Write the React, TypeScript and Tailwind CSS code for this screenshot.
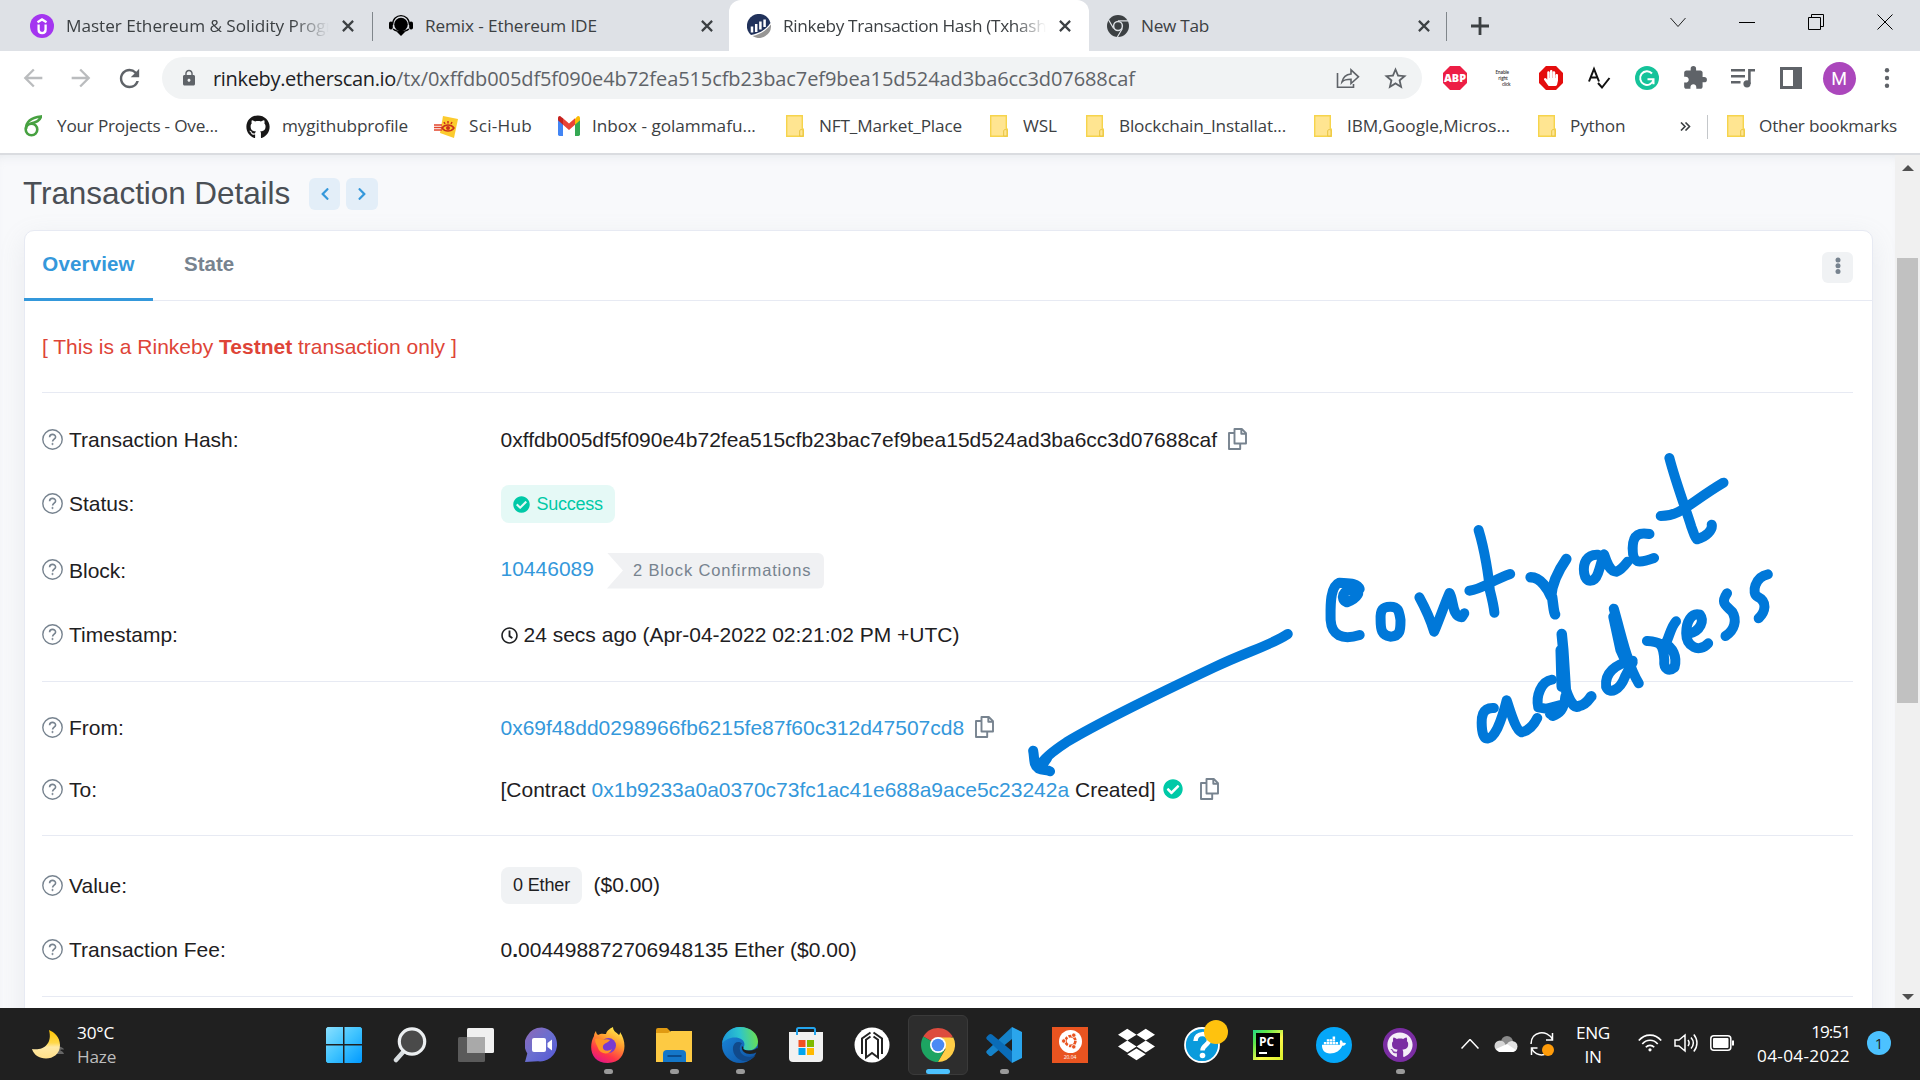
import React from "react";
import { FaGithub, FaCheckCircle, FaDropbox, FaDocker, FaRegClock, FaChevronLeft, FaChevronRight, FaHandPaper } from "react-icons/fa";
import { MdExtension, MdStarBorder, MdLock, MdArrowBack, MdArrowForward, MdRefresh } from "react-icons/md";

function CloseX() {
  return (
    <svg viewBox="0 0 12 12" className="size-3 shrink-0" stroke="#3c4043" strokeWidth="2.2" fill="none">
      <path d="M.9.9l10.2 10.2M11.1.9.9 11.1" />
    </svg>
  );
}

function Udemy() {
  return (
    <svg viewBox="0 0 24 24" className="size-6">
      <circle cx="12" cy="12" r="12" fill="#a435f0" />
      <path d="M7.500 8.200 12 5.400l4.500 2.800M8.600 10.500v5c0 4.800 7 4.800 7 0v-5" fill="none" stroke="#fff" strokeWidth="2.300" />
    </svg>
  );
}

function Remix() {
  return (
    <svg viewBox="0 0 24 24" className="size-6">
      <path d="M3.500 11C3.500-1.500 20.500-1.500 20.500 11" fill="none" stroke="#000" strokeWidth="1.300" />
      <circle cx="12" cy="10.500" r="6.800" fill="#000" />
      <rect x="0" y="7.500" width="3.800" height="8" rx="1.800" fill="#000" />
      <rect x="20.200" y="7.500" width="3.800" height="8" rx="1.800" fill="#000" />
      <path d="M4 15c4 3.500 12 3.500 16 0" fill="none" stroke="#000" strokeWidth="1.100" />
      <path d="M7.500 17.500h9L12 22z" fill="#000" />
    </svg>
  );
}

function Etherscan() {
  return (
    <svg viewBox="0 0 24 24" className="size-6">
      <path d="M4 21A12 12 0 1 1 23.500 9C18 17 11 19.500 4 21z" fill="#21325b" />
      <path d="M5 12.500v6M9.200 10v8M13.400 7.500v8M17.600 5.500v7.500" stroke="#fff" strokeWidth="2.500" />
      <path d="M5.500 22C14 20 20 16 23.900 10.500A12 12 0 0 1 5.500 22z" fill="#979695" />
    </svg>
  );
}

function ChromeGrey() {
  return (
    <svg viewBox="0 0 24 24" className="size-[22px]">
      <circle cx="12" cy="12" r="12" fill="#3c4043" />
      <path d="M12 6.500h11M7.200 14.700 1.800 5.400M16.800 14.700 11.300 24" stroke="#dee1e6" strokeWidth="1.300" />
      <circle cx="12" cy="12" r="5.600" fill="#dee1e6" />
      <circle cx="12" cy="12" r="4" fill="#3c4043" />
    </svg>
  );
}

function TabStrip() {
  return (
    <div className="flex h-[51px] shrink-0 bg-[#dee1e6] text-[17.2px] text-[#3c4043]">
      <div className="flex w-[372px] items-center pl-[30px] pt-px">
        <Udemy />
        <div className="-mt-px ml-[12px] w-[263px] overflow-hidden whitespace-nowrap [mask-image:linear-gradient(90deg,#000_86%,transparent)]"><span className="tracking-[-0.03px]">Master Ethereum &amp; Solidity Progr</span></div>
        <span className="ml-[13px]"><CloseX /></span>
      </div>
      <div className="mt-3 h-[29px] w-px bg-[#80868b]" />
      <div className="flex w-[356px] items-center pl-4 pt-px">
        <Remix />
        <span className="-mt-px ml-[12px] tracking-[-0.12px]">Remix - Ethereum IDE</span>
        <span className="ml-auto mr-[16px]"><CloseX /></span>
      </div>
      <div className="flex w-[360px] items-center rounded-t-xl bg-white pl-[18px] pt-px">
        <Etherscan />
        <div className="-mt-px ml-[12px] w-[263px] overflow-hidden whitespace-nowrap [mask-image:linear-gradient(90deg,#000_88%,transparent)]"><span className="tracking-[-0.33px]">Rinkeby Transaction Hash (Txhash:</span></div>
        <span className="ml-[13px]"><CloseX /></span>
      </div>
      <div className="flex w-[357px] items-center pl-[18px] pt-px">
        <ChromeGrey />
        <span className="-mt-px ml-[12px] tracking-[-0.28px]">New Tab</span>
        <span className="ml-auto mr-[16px]"><CloseX /></span>
      </div>
      <div className="mt-3 h-[29px] w-px bg-[#80868b]" />
      <div className="flex items-center pl-6">
        <svg viewBox="0 0 18 18" className="size-[18px]" stroke="#3c4043" strokeWidth="2.800"><path d="M9 0v18M0 9h18" /></svg>
      </div>
      <div className="ml-auto mr-[27px] flex h-[43px] items-center gap-[53px]">
        <svg viewBox="0 0 16 16" className="size-4" fill="none" stroke="#222"><path d="m.5 4 7.500 8.500L15.500 4" /></svg>
        <svg viewBox="0 0 16 16" className="size-4" fill="none" stroke="#000"><path d="M0 8.500h16" /></svg>
        <svg viewBox="0 0 16 16" className="size-4" fill="none" stroke="#000"><path d="M.5 3.500h12v12H.5zM3.500 3V.5h12v12H13" /></svg>
        <svg viewBox="0 0 16 16" className="size-4" fill="none" stroke="#000"><path d="m.5.5 15 15M15.500.5l-15 15" /></svg>
      </div>
    </div>
  );
}

function Cell({ children }: { children: React.ReactNode }) {
  return <div className="flex w-12 items-center justify-center">{children}</div>;
}

function Toolbar() {
  return (
    <div className="flex h-[54px] shrink-0 items-center bg-white text-[#5f6368]">
      <div className="flex w-[162px] items-center pl-[19px]">
        <MdArrowBack className="size-7 text-[#babcbe]" />
        <MdArrowForward className="ml-5 size-7 text-[#babcbe]" />
        <MdRefresh className="ml-5 size-[29px]" />
      </div>
      <div className="flex h-[42px] w-[1260px] items-center rounded-full bg-[#f1f3f4] pl-[18px]">
        <MdLock className="size-[18px]" />
        <span className="ml-[15px] mt-px whitespace-nowrap text-[20px]">
          <span className="tracking-[-0.33px] text-[#202124]">rinkeby.etherscan.io</span>
          <span className="tracking-[-0.09px]">/tx/0xffdb005df5f090e4b72fea515cfb23bac7ef9bea15d524ad3ba6cc3d07688caf</span>
        </span>
        <svg viewBox="0 0 24 24" className="ml-auto size-6" fill="none" stroke="#5f6368" strokeWidth="1.600"><path d="M1.500 7v14.200h16V18M6 16c1-5 4-7.500 9-8V3.800l7.500 7-7.500 6.700v-4.200c-4 0-7 .5-9 2.700z" /></svg>
        <MdStarBorder className="ml-[22px] mr-[13px] size-[27px]" />
      </div>
      <div className="ml-[9px] flex">
        <Cell>
          <svg viewBox="0 0 24 24" className="size-6"><path d="M7 0h10l7 7v10l-7 7H7l-7-7V7z" fill="#ed1e45" /><text x="12" y="16.200" textAnchor="middle" fontSize="11" fontWeight="800" fill="#fff" fontFamily="Open Sans, sans-serif" textLength="22" lengthAdjust="spacingAndGlyphs">ABP</text></svg>
        </Cell>
        <Cell>
          <div className="flex w-[15px] flex-col text-[4.500px] font-semibold leading-[6px] tracking-[-0.2px] text-[#333]"><span>Enable</span><span className="text-center">right</span><span className="text-right">click</span></div>
        </Cell>
        <Cell>
          <div className="flex size-6 items-center justify-center bg-[#e40d0d] [clip-path:polygon(29%_0,71%_0,100%_29%,100%_71%,71%_100%,29%_100%,0_71%,0_29%)]"><FaHandPaper className="size-4 text-white" /></div>
        </Cell>
        <Cell>
          <svg viewBox="0 0 24 24" className="size-6" fill="none" stroke="#111" strokeWidth="2"><path d="M2 15.500 7 3l5 12.500M3.800 11.500h6.500M11 17l4 4.500L22.500 12" /></svg>
        </Cell>
        <Cell>
          <svg viewBox="0 0 24 24" className="size-6"><circle cx="12" cy="12" r="12" fill="#15c39a" /><path d="M17 7.500A6.800 6.800 0 1 0 18.500 14M12.500 13.300h6v5" fill="none" stroke="#fff" strokeWidth="2" /></svg>
        </Cell>
        <Cell><MdExtension className="size-[26px]" /></Cell>
        <Cell>
          <svg viewBox="0 0 24 20" className="h-5 w-6"><path d="M0 2.200h14M0 8.200h14M0 14.200h9.500" stroke="#5f6368" strokeWidth="2.400" /><circle cx="16" cy="15.800" r="3.600" fill="#5f6368" /><path d="M18.400 16V2.200H24" fill="none" stroke="#5f6368" strokeWidth="2.600" /></svg>
        </Cell>
        <Cell>
          <svg viewBox="0 0 22 22" className="size-[22px]"><path d="M0 0h22v22H0zM3 3v16h10V3z" fillRule="evenodd" fill="#5f6368" /></svg>
        </Cell>
        <Cell><div className="flex size-[33px] items-center justify-center rounded-full bg-[#ab47bc] font-[Roboto] text-[18px] text-white">M</div></Cell>
        <Cell>
          <svg viewBox="0 0 6 20" className="h-5 w-1.5" fill="#5f6368"><circle cx="3" cy="2.200" r="2.200" /><circle cx="3" cy="10" r="2.200" /><circle cx="3" cy="17.800" r="2.200" /></svg>
        </Cell>
      </div>
    </div>
  );
}

function Folder() {
  return (
    <svg viewBox="0 0 18 22" className="h-[22px] w-[18px]"><path d="M.7.7h15.600v13.500h1.200v7H.7z" fill="#ffe591" stroke="#f6d44c" strokeWidth="1.400" /><path d="M13.700 21v-5.300c0-1.500 3.300-1.500 3.300 0V21z" fill="#ffe591" stroke="#e8c440" /></svg>
  );
}

function Bookmarks() {
  return (
    <div className="flex h-[50px] shrink-0 items-center border-b-2 border-[#dadce0] bg-white pb-[5px] pl-6 text-[17.2px] text-[#3c4043] *:shrink-0">
      <div className="flex w-[222px] items-center">
        <svg viewBox="0 0 18 22" className="h-[22px] w-[18px]" fill="none" stroke="#47a141" strokeWidth="2.600"><circle cx="7.500" cy="14.500" r="5.800" /><path d="M2 14C2 7 7 2.500 17 1.500 16 6 12 7.500 6.500 8.500" /></svg>
        <span className="-mt-0.5 ml-[15px] tracking-[-0.22px]">Your Projects - Ove...</span>
      </div>
      <div className="flex w-[188px] items-center"><FaGithub className="size-6 text-[#181717]" /><span className="-mt-0.5 ml-[12px] tracking-[-0.12px]">mygithubprofile</span></div>
      <div className="flex w-[124px] items-center">
        <svg viewBox="0 0 24 24" className="size-6"><path d="M9 1l15 3-4 19-14-5z" fill="#fccb2e" /><path d="M0 10h8M0 12.500h8M0 15h8" stroke="#e2442b" strokeWidth="1.300" /><path d="M8 13c3-4 9-4 12 0-3 4-9 4-12 0zM10 7l1 2M14 6v2.500M18 7l-1 2" fill="none" stroke="#c9301c" strokeWidth="1.500" /><circle cx="14" cy="13" r="2" fill="#c9301c" /></svg>
        <span className="-mt-0.5 ml-[11px] tracking-[0.25px]">Sci-Hub</span>
      </div>
      <div className="flex w-[228px] items-center">
        <svg viewBox="0 0 22 20" className="h-5 w-[22px]" preserveAspectRatio="none"><g transform="scale(1 1.170)"><path d="M0 3v12.500A1.500 1.500 0 0 0 1.500 17H5V6z" fill="#4285f4" /><path d="M22 3v12.500a1.500 1.500 0 0 1-1.500 1.500H17V6z" fill="#34a853" /><path d="M17 2.500V7.500l5-3.800V2c0-2-2-2.500-3.300-1.200z" fill="#fbbc04" /><path d="M5 7.500V2l6 4.500L17 2v5.500L11 12z" fill="#ea4335" /><path d="M0 2v1.700l5 3.800V2L3.300.8C2-.5 0 0 0 2z" fill="#c5221f" /></g></svg>
        <span className="-mt-0.5 ml-[12px] tracking-[-0.03px]">Inbox - golammafu...</span>
      </div>
      <div className="flex w-[204px] items-center"><Folder /><span className="-mt-0.5 ml-[15px] tracking-[-0.14px]">NFT_Market_Place</span></div>
      <div className="flex w-[96px] items-center"><Folder /><span className="-mt-0.5 ml-[15px] tracking-[-0.1px]">WSL</span></div>
      <div className="flex w-[228px] items-center"><Folder /><span className="-mt-0.5 ml-[15px] tracking-[-0.17px]">Blockchain_Installat...</span></div>
      <div className="flex w-[224px] items-center"><Folder /><span className="-mt-0.5 ml-[15px] tracking-[-0.05px]">IBM,Google,Micros...</span></div>
      <div className="flex w-[142px] items-center"><Folder /><span className="-mt-0.5 ml-[14px] tracking-[-0.2px]">Python</span></div>
      <svg viewBox="0 0 11 9" className="h-[9px] w-[11px]" fill="none" stroke="#3c4043" strokeWidth="1.600"><path d="m1 .5 4 4-4 4m4.500-8 4 4-4 4" /></svg>
      <div className="ml-4 h-6 w-px bg-[#c4c7ca]" />
      <div className="ml-[19px] flex items-center"><Folder /><span className="-mt-0.5 ml-[14px] tracking-[-0.21px]">Other bookmarks</span></div>
    </div>
  );
}

function Help() {
  return (
    <svg viewBox="0 0 21 21" className="mr-1.5 size-[21px] shrink-0 -translate-y-px" fill="none" stroke="#77838f" strokeWidth="1.400">
      <circle cx="10.500" cy="10.500" r="9.700" />
      <path d="M7.600 8.300c0-4 6-3.700 6-.3 0 2.200-3 2.200-3 4.600" strokeWidth="1.600" />
      <circle cx="10.500" cy="15" r=".7" fill="#77838f" strokeWidth=".8" />
    </svg>
  );
}

function Row({ label, h, children }: { label: string; h: string; children: React.ReactNode }) {
  return (
    <div className={`flex items-center ${h}`}>
      <div className="flex w-[458.5px] items-center"><Help />{label}</div>
      <div className="flex items-center whitespace-nowrap">{children}</div>
    </div>
  );
}

function Copy({ m }: { m: string }) {
  return (
    <svg viewBox="0 0 19 22" className={`h-[22px] w-[19px] -translate-y-px ${m}`} fill="none" stroke="#77838f" strokeWidth="1.900" strokeLinejoin="round">
      <path d="M6.500 1h7.300L18 5.200V15.500H6.500zM13.300 1.200v4.500h4.500M6.300 5H1v16h11.200v-5" />
    </svg>
  );
}

function Page() {
  return (
    <div className="flex h-[853px] shrink-0 overflow-hidden bg-[#f8f9fb] font-['Liberation_Sans',Arial,sans-serif] text-[21px] text-[#1e2022]">
      <div className="flex w-[1895px] flex-col pl-6 pr-[22px] shadow-[inset_0_8px_12px_-8px_rgba(140,152,164,0.2)]">
        <div className="-ml-px flex h-[75px] shrink-0 items-center pt-[3px]">
          <span className="text-[31.5px] tracking-[-0.07px] text-[#4a4f55]">Transaction Details</span>
          <div className="ml-[19px] flex gap-1.5">
            <div className="flex h-8 w-[31px] items-center justify-center rounded-md bg-[#e3eef8] text-[#3498db]"><FaChevronLeft className="size-[14px]" /></div>
            <div className="flex h-8 w-8 items-center justify-center rounded-md bg-[#e3eef8] text-[#3498db]"><FaChevronRight className="size-[14px]" /></div>
          </div>
        </div>
        <div className="h-[900px] shrink-0 rounded-[10px] border border-[#e7eaf3] bg-white shadow-[0_8px_27px_rgba(140,152,164,0.14)]">
          <div className="-ml-px flex h-[70px] items-stretch justify-between border-b border-[#e7eaf3] pr-[19px] font-bold">
            <div className="flex">
              <div className="-mb-px flex w-[129px] justify-center border-b-[3px] border-[#3498db] pt-[18px] text-[#3498db]"><span className="text-[20.5px] tracking-[0.15px]">Overview</span></div>
              <span className="ml-[31px] pt-[18px] text-[20.5px] text-[#77838f]">State</span>
            </div>
            <div className="mt-[21px] flex size-[31px] items-center justify-center rounded-md bg-[#f0f2f4] text-[#77838f]">
              <svg viewBox="0 0 6 18" className="-mt-1 h-[18px] w-1.5" fill="#77838f"><circle cx="3" cy="3" r="2.500" /><circle cx="3" cy="8.700" r="2.500" /><circle cx="3" cy="14.400" r="2.500" /></svg>
            </div>
          </div>
          <div className="ml-[17px] mr-[19px] divide-y divide-[#e7eaf3]">
            <div className="flex h-[92px] items-center whitespace-pre text-[#de4437]"><span>[ This is a Rinkeby <b>Testnet</b> transaction only ]</span></div>
            <div className="h-[289px] pt-[15px]">
              <Row label="Transaction Hash:" h="h-16"><span>0xffdb005df5f090e4b72fea515cfb23bac7ef9bea15d524ad3ba6cc3d07688caf</span><Copy m="ml-[11px]" /></Row>
              <Row label="Status:" h="h-16">
                <div className="flex h-[38px] items-center rounded-lg bg-[#e5f9f6] px-3 text-[18px] tracking-[-0.25px] text-[#00c9a7]"><FaCheckCircle className="mr-[7px] size-[17px]" /><span>Success</span></div>
              </Row>
              <Row label="Block:" h="h-[69px]">
                <span className="-mt-[3px] text-[#3498db]">10446089</span>
                <span className="ml-[13px] flex h-9 w-[217px] items-center rounded-r-md bg-[#f0f1f3] pl-[26px] text-[16.5px] tracking-[0.85px] text-[#77838f] [clip-path:polygon(0_0,100%_0,100%_100%,0_100%,16px_50%)]">2 Block Confirmations</span>
              </Row>
              <Row label="Timestamp:" h="h-[60px]"><FaRegClock className="mr-1.5 size-[17px]" /><span>24 secs ago (Apr-04-2022 02:21:02 PM +UTC)</span></Row>
            </div>
            <div className="h-[154px] pt-4">
              <Row label="From:" h="h-[60px]"><span className="text-[#3498db]">0x69f48dd0298966fb6215fe87f60c312d47507cd8</span><Copy m="ml-[11px]" /></Row>
              <Row label="To:" h="h-16">
                <span className="whitespace-pre">[Contract <span className="text-[#3498db]">0x1b9233a0a0370c73fc1ac41e688a9ace5c23242a</span> Created]</span>
                <FaCheckCircle className="ml-[7px] size-5 -translate-y-px text-[#00c9a7]" /><Copy m="ml-[17px]" />
              </Row>
            </div>
            <div className="h-[161px] pt-[18px]">
              <Row label="Value:" h="h-16">
                <div className="-mt-0.5 flex h-[37px] items-center rounded-lg bg-[#f0f2f4] px-[12.5px] text-[18px] tracking-[-0.15px]">0 Ether</div>
                <span className="-mt-[3px] ml-[11px]">($0.00)</span>
              </Row>
              <Row label="Transaction Fee:" h="h-16"><span className="flex whitespace-pre">0<b>.</b>004498872706948135 Ether ($0.00)</span></Row>
            </div>
            <div className="h-24" />
          </div>
        </div>
      </div>
      <div className="flex w-[25px] flex-col items-center bg-[#f0f0f0]">
        <svg viewBox="0 0 12 6" className="mt-2.5 h-1.5 w-3" fill="#505050"><path d="m6 0 6 6H0z" /></svg>
        <div className="mt-[87px] h-[445px] w-[21px] bg-[#c1c1c1]" />
        <svg viewBox="0 0 12 6" className="mb-2 mt-auto h-1.5 w-3" fill="#505050"><path d="m6 6 6-6H0z" /></svg>
      </div>
    </div>
  );
}

/** Freehand pen strokes drawn over the page. */
function Ink() {
  return (
    <svg viewBox="0 0 1568 1080" preserveAspectRatio="none" className="pointer-events-none absolute left-[1000px] top-[430px] h-[360px] w-[800px] fill-none stroke-[#0078d9] stroke-[10px] *:[vector-effect:non-scaling-stroke]" strokeLinecap="round" strokeLinejoin="round">
      <path d="M564 612C530 647 480 667 420 712C330 777 190 882 130 937C100 967 85 987 78 1007" />
      <path d="M65 962C68 985 65 1005 75 1015C85 1022 92 1018 98 1024M80 1012L92 985" />
      <path d="M705 477C700 457 680 460 665 458C645 470 648 540 648 570C650 615 670 632 705 615M680 517C665 510 672 475 692 480C712 480 700 505 680 517" />
      <path d="M765 530C750 530 745 540 746 570C746 600 748 615 765 620C785 618 785 600 785 570C782 540 780 530 765 530" />
      <path d="M822 502C832 530 845 575 851 605C862 565 872 520 881 489C890 510 885 560 905 562L910 550" />
      <path d="M938 300C950 360 958 440 960 480C965 510 968 530 969 548M920 482C945 478 965 450 1000 432" />
      <path d="M1040 442C1060 442 1075 480 1080 500C1082 460 1095 420 1110 387M1082 500C1085 530 1085 545 1088 553" className="stroke-[10.5px]" />
      <path d="M1172 374C1150 372 1142 400 1145 430C1148 460 1165 460 1172 430C1178 405 1180 385 1184 373C1190 400 1195 425 1208 425C1218 420 1225 405 1230 395" />
      <path d="M1273 312C1255 307 1240 310 1240 355C1240 400 1250 402 1282 384" />
      <path d="M1312 84C1325 160 1345 240 1355 290C1360 310 1362 325 1366 328C1385 320 1397 300 1395 284M1295 258C1335 258 1350 220 1418 158" />
      <path d="M968 834C945 832 942 860 945 900C948 935 962 935 975 895C985 860 990 830 993 811C1000 840 1010 900 1022 907C1040 900 1048 880 1053 864" />
      <path d="M1082 749C1060 754 1050 800 1055 832L1078 838L1083 858C1096 850 1106 840 1108 800M1078 852L1076 834L1102 824" />
      <path d="M1101 612L1104 660L1109 780M1099 660L1101 770M1109 780C1120 830 1130 835 1135 828C1150 825 1155 805 1159 799" className="stroke-[10.5px]" />
      <path d="M1240 692C1205 702 1185 730 1188 770C1195 795 1215 780 1225 740L1240 697M1203 536C1215 600 1222 650 1232 690C1240 730 1248 750 1252 760M1202 560L1216 660L1228 700" />
      <path d="M1268 633C1290 635 1300 635 1302 690C1300 720 1312 725 1322 712C1328 680 1318 650 1302 640M1325 574C1315 590 1312 620 1305 640" />
      <path d="M1348 612C1375 605 1380 570 1372 554C1355 547 1345 575 1345 610C1345 650 1370 670 1388 640" />
      <path d="M1425 490C1412 520 1422 525 1435 545C1445 570 1440 600 1422 618" />
      <path d="M1505 433C1480 440 1472 490 1485 500C1505 515 1500 545 1487 565" />
    </svg>
  );
}

function Pin({ children, dot, active }: { children: React.ReactNode; dot?: boolean; active?: boolean }) {
  return (
    <div className="relative flex h-[60px] w-[66px] items-center justify-center">
      <div className={active ? "flex h-[60px] w-[60px] items-center justify-center rounded-md border border-[#3a3a3a] bg-[#2d2d2d]" : "flex"}>{children}</div>
      {dot && <span className="absolute bottom-px h-[5px] w-[9px] rounded-full bg-[#9a9a9a]" />}
      {active && <span className="absolute bottom-px h-[5px] w-6 rounded-full bg-[#4cc2ff]" />}
    </div>
  );
}

function Taskbar() {
  return (
    <div className="flex h-[72px] shrink-0 items-center bg-[#202020] text-[17.2px] leading-6 text-white">
      <div className="flex w-[311px] items-center pl-8">
        <svg viewBox="0 0 33 29" className="h-[29px] w-[33px]">
          <defs><linearGradient id="moon" x1="0" y1="0" x2="0" y2="1"><stop offset="0" stopColor="#ffc400" /><stop offset=".45" stopColor="#ffd84a" /><stop offset=".6" stopColor="#ffe9a6" /><stop offset="1" stopColor="#ffdf8a" /></linearGradient></defs>
          <path d="M22 24h10c-1-3-3-3-4-4 2-1 4 0 4-1-2-2-5-3-7-3z" fill="#666" />
          <path d="M17 0c5 2 11 7 11 15 0 9-7 13.500-14 13.500C7 28.500 2 25 0 19c10 2 21-4 17-19z" fill="url(#moon)" />
        </svg>
        <div className="ml-[12px] flex translate-y-px flex-col"><span className="tracking-[-0.2px]">30°C</span><span className="tracking-[-0.2px] text-[#bdbdbd]">Haze</span></div>
      </div>
      <div className="flex pt-px">
        <Pin>
          <svg viewBox="0 0 36 36" className="size-9"><defs><linearGradient id="win" x1="0" y1="0" x2="1" y2="1"><stop offset="0" stopColor="#8ae0ff" /><stop offset=".5" stopColor="#3fc3ff" /><stop offset="1" stopColor="#0099ff" /></linearGradient></defs><path d="M1.500 0H17v17H0V1.500zM18.500 0H34.500L36 1.500V17H18.500zM0 18.500H17V36H1.500L0 34.500zM18.500 18.500H36V34.500L34.500 36H18.500z" fill="url(#win)" /></svg>
        </Pin>
        <Pin>
          <svg viewBox="0 0 34 36" className="h-9 w-[34px]" fill="none"><path d="M11 24 3 33" stroke="#d8dde0" strokeWidth="4.500" strokeLinecap="round" /><circle cx="19" cy="14.500" r="12.700" fill="#4a4a4a" stroke="#eceff1" strokeWidth="3.200" /></svg>
        </Pin>
        <Pin>
          <svg viewBox="0 0 36 36" className="size-9"><rect x="9" y="1" width="27" height="25" rx="1.500" fill="#f0f0f0" /><rect x="0" y="10" width="27" height="25" rx="1.500" fill="#5a5a5a" /><path d="M9 10h18v16H9z" fill="#a9a9a9" /></svg>
        </Pin>
        <Pin>
          <svg viewBox="0 0 34 36" className="h-9 w-[34px]"><defs><linearGradient id="chat" x1="0" y1="0" x2="1" y2="1"><stop offset="0" stopColor="#8f68b5" /><stop offset=".5" stopColor="#6a6fd0" /><stop offset="1" stopColor="#5457d6" /></linearGradient></defs><path d="M17 .5a17 17 0 1 1-4 33.800L0 35l2.300-8.500A17 17 0 0 1 17 .5z" fill="url(#chat)" /><rect x="7" y="11" width="14" height="14" rx="2" fill="#fff" /><path d="m22.500 16 4.500-3.500v11L22.500 20z" fill="#fff" /></svg>
        </Pin>
        <Pin dot>
          <svg viewBox="0 0 34 36" className="h-9 w-[34px]"><defs><linearGradient id="fx" x1=".8" y1="0" x2=".3" y2="1"><stop offset="0" stopColor="#fff44f" /><stop offset=".4" stopColor="#ff9a2e" /><stop offset=".75" stopColor="#ff3647" /><stop offset="1" stopColor="#e31587" /></linearGradient></defs><path d="M3 9c0-2 1-4 2-5 0 2 1 3 2 4 3-2 6-1 8-1C16 3 20 1 22 0c0 4 3 5 6 8 1-1 1-2 1-3 8 11 6 31-12 31C0 36-3 20 3 9z" fill="url(#fx)" /><circle cx="17.500" cy="18.500" r="7.500" fill="#7a3bd0" /><path d="M4 12c3-1 6 0 8 1 2-1 5-1 7 0-2 3-6 3-7 6-1 5 5 6 9 3-3 7-12 5-14-1-1-3-3-5-3-9z" fill="#ff9526" /></svg>
        </Pin>
        <Pin dot>
          <svg viewBox="0 0 36 34" className="h-[34px] w-9"><path d="M0 2a2 2 0 0 1 2-2h9l3 3v4H0z" fill="#e09a12" /><path d="M0 5h12l3-2h21v31H0z" fill="#fdca43" /><path d="M7 26a4 4 0 0 1 4-4h15a4 4 0 0 1 4 4v8H7z" fill="#1477c9" /><path d="M11.500 28h14" stroke="#0a4d8f" strokeWidth="2" /></svg>
        </Pin>
        <Pin dot>
          <svg viewBox="0 0 36 36" className="size-9"><defs><linearGradient id="eg" x1="0" y1=".5" x2="1" y2=".4"><stop offset="0" stopColor="#1b96d8" /><stop offset=".5" stopColor="#2cc4cf" /><stop offset="1" stopColor="#6be04f" /></linearGradient><linearGradient id="eb" x1="0" y1="0" x2="1" y2="1"><stop offset="0" stopColor="#1a8be0" /><stop offset="1" stopColor="#0f4f9e" /></linearGradient></defs><circle cx="18" cy="18" r="18" fill="url(#eb)" /><path d="M0 17C1 7 9 0 18 0c11 0 18 7 18 14.500 0 6-5 9-9.500 9-4 0-6-1.500-5-3 2-3 1-8-5-9.500C10 9.500 3 12 0 17z" fill="url(#eg)" /><path d="M11 20c-1 7 5 14 12 14 4 0 8-2 10.500-5.500-6 3-14 1-15.500-5-.8-3 .5-6 2-7-4-3-8-1-9 3.500z" fill="#114a8b" /><path d="M20 19c-1 4 2 8 8 8 3 0 5-1 6-1.500 1 0 1 .5.500 1.500L37 22l-2-1c-2 2-5 2.500-8.500 2.500-4 0-6-1.500-5-3z" fill="#202020" /></svg>
        </Pin>
        <Pin>
          <svg viewBox="0 0 36 36" className="size-9"><path d="M9 8V2.500A1.500 1.500 0 0 1 10.500 1h15A1.500 1.500 0 0 1 27 2.500V8" fill="none" stroke="#23a5ee" strokeWidth="2" /><path d="M1 5h34v26a4 4 0 0 1-4 4H5a4 4 0 0 1-4-4z" fill="#f1f1f1" /><path d="M9 2.500V8M27 2.500V8" stroke="#23a5ee" strokeWidth="2" /><path d="M10.500 13h7v7h-7z" fill="#f25022" /><path d="M19 13h7v7h-7z" fill="#7fba00" /><path d="M10.500 21h7v7h-7z" fill="#00a4ef" /><path d="M19 21h7v7h-7z" fill="#ffb900" /></svg>
        </Pin>
        <Pin>
          <svg viewBox="0 0 36 36" className="size-9"><circle cx="18" cy="18" r="17.500" fill="#fff" /><path d="M16.500 5.500 8 11.500V27M19.500 5.500 28 11.500V27M16.500 9.500 12 12.700V30.500l6-4.500 6 4.500V12.700L19.500 9.500" fill="none" stroke="#222" strokeWidth="2" /></svg>
        </Pin>
        <Pin active>
          <svg viewBox="0 0 34 34" className="size-[34px]"><path d="M17 17 2.300 8.500A17 17 0 0 1 31.700 8.500z" fill="#dd4b3e" /><path d="M17 17 2.300 8.500A17 17 0 0 0 17 34l7-13z" fill="#1da462" /><path d="M17 9.500h15.300A17 17 0 0 1 17 34l7.500-13z" fill="#ffcd46" /><circle cx="17" cy="17" r="8" fill="#fff" /><circle cx="17" cy="17" r="6.300" fill="#4a8af4" /></svg>
        </Pin>
        <Pin dot>
          <svg viewBox="0 0 36 36" className="size-9"><path d="M26 0v36l10-5V5z" fill="#2aa5ec" /><path d="M26 0 1 23.500c-1 1-1 2 0 3l2 2c1 .7 2 .7 3 0L26 12z" fill="#1583ca" /><path d="M26 36 1 12.500c-1-1-1-2 0-3l2-2c1-.7 2-.7 3 0L26 24z" fill="#0a6cb8" /></svg>
        </Pin>
        <Pin>
          <div className="flex h-9 w-9 flex-col items-center bg-[#e95420] pt-[3px]"><div className="flex size-[23px] shrink-0 items-center justify-center rounded-full bg-white"><svg viewBox="0 0 20 20" className="size-[18px]" fill="none" stroke="#e95420" strokeWidth="3"><circle cx="10.500" cy="10" r="5.500" strokeDasharray="10 1.500" /><g fill="#e95420" stroke="#fff" strokeWidth="1"><circle cx="3" cy="10" r="2.500" /><circle cx="14.200" cy="3.500" r="2.500" /><circle cx="14.200" cy="16.500" r="2.500" /></g></svg></div><span className="text-[5px] leading-[9px]">20.04</span></div>
        </Pin>
        <Pin><FaDropbox className="size-[37px] text-white" /></Pin>
        <Pin>
          <div className="relative"><svg viewBox="0 0 36 36" className="size-9"><circle cx="18" cy="18" r="17" fill="#0a9bdc" stroke="#fff" strokeWidth="1.800" /><path d="M11.500 14c0-9 13.500-9 13.500-1 0 5-6.500 5-6.500 10.500" fill="none" stroke="#fff" strokeWidth="4.500" /><circle cx="18.500" cy="28.500" r="2.800" fill="#fff" /></svg><span className="absolute -right-2 -top-[7px] size-6 rounded-full bg-[#ffc20e]" /></div>
        </Pin>
        <Pin>
          <div className="flex size-[30px] items-center justify-center bg-[linear-gradient(135deg,#21d789_0%,#5fe84a_25%,#fcf84a_60%,#d8f02a_100%)]"><div className="flex size-[24px] flex-col bg-black pl-[3px] pt-0.5 text-[12px] font-bold leading-[13px]">PC<span className="mt-1 h-[2px] w-2 bg-white" /></div></div>
        </Pin>
        <Pin><div className="flex size-9 items-center justify-center rounded-full bg-[#05a7f8]"><FaDocker className="size-6 text-white" /></div></Pin>
        <Pin dot><div className="flex size-[34px] items-center justify-center rounded-full bg-[#7b2da3]"><FaGithub className="size-[26px] text-[#f4eef8]" /></div></Pin>
      </div>
      <svg viewBox="0 0 18 10" className="ml-[28px] h-2.5 w-[18px]" fill="none" stroke="#fff" strokeWidth="1.500"><path d="m.5 9.500 8.500-9 8.500 9" /></svg>
      <svg viewBox="0 0 24 16" className="ml-[15px] h-4 w-6"><circle cx="13" cy="6" r="6" fill="#8a8a8a" /><circle cx="6" cy="10" r="5.500" fill="#d5d5d5" /><circle cx="18" cy="10.500" r="5.500" fill="#e3e3e3" /><path d="M2 13 13 8l9 6-3 2H5z" fill="#fff" /></svg>
      <svg viewBox="0 0 24 24" className="ml-3 size-6" fill="none" stroke="#fff" strokeWidth="1.500"><path d="M1 12C1-1 17-3 22.500 7.500M22.500 1v7h-6.500M1.500 23v-7h6M1.500 16c2 5 7 8 13 6.500" /><circle cx="18" cy="18" r="6" fill="#ff9c0a" stroke="none" /></svg>
      <div className="flex w-[78px] translate-y-px flex-col items-center"><span className="tracking-[-0.4px]">ENG</span><span className="tracking-[-0.4px]">IN</span></div>
      <svg viewBox="0 0 24 18" className="ml-1.5 h-[18px] w-6 -translate-y-px" fill="none" stroke="#fff" strokeWidth="1.700"><path d="M.8 6.500c6-7.300 16.400-7.300 22.400 0M4.300 10c4.200-5 11.200-5 15.400 0M7.800 13.300c2.400-2.700 6-2.700 8.400 0" /><circle cx="12" cy="15.800" r="1.600" fill="#fff" stroke="none" /></svg>
      <svg viewBox="0 0 24 20" className="ml-3 h-5 w-6 -translate-y-px" fill="none" stroke="#fff" strokeWidth="1.500"><path d="M1 7v6h4l6 5V2L5 7zM14 7c1.500 2 1.500 4 0 6M17 4.500c3 3.500 3 7.500 0 11M19.800 1.500c4.200 5 4.200 12 0 17" /></svg>
      <svg viewBox="0 0 24 16" className="ml-3 h-4 w-6 -translate-y-px"><rect x=".8" y=".8" width="20" height="14.400" rx="3" fill="none" stroke="#fff" strokeWidth="1.500" /><rect x="3" y="3" width="15.500" height="10" rx="1" fill="#fff" /><path d="M22 5.500h2v5h-2z" fill="#fff" /></svg>
      <div className="flex w-[116px] flex-col items-end"><span className="tracking-[-1px]">19:51</span><span className="tracking-[0.33px]">04-04-2022</span></div>
      <div className="ml-[17px] flex size-6 -translate-y-px items-center justify-center rounded-full bg-[#4cc2ff] text-[15px] text-[#202020]">1</div>
    </div>
  );
}

export default function App() {
  return (
    <div className="relative flex h-[1080px] w-[1920px] flex-col overflow-hidden font-['Open_Sans',sans-serif]">
      <TabStrip />
      <Toolbar />
      <Bookmarks />
      <Page />
      <Taskbar />
      <Ink />
    </div>
  );
}
